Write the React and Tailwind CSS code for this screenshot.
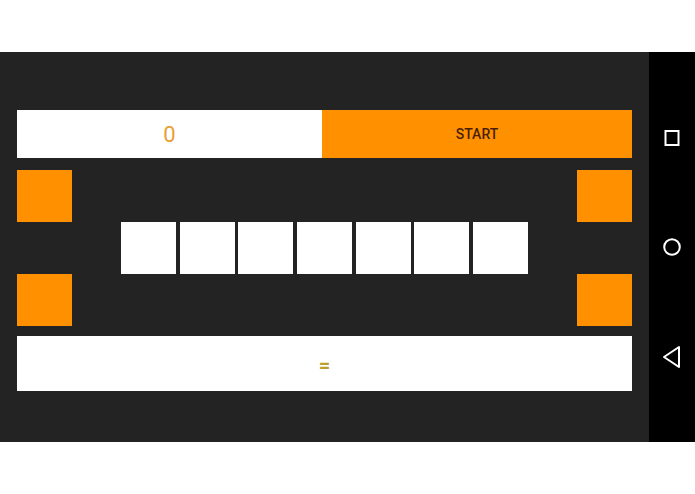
const Orange = () => <div className="h-[52px] w-[55px] bg-[#ff9100]" />;

export default function App() {
  return (
    <div className="w-[695px] h-[494px] bg-white flex flex-col font-['Roboto',sans-serif]">
      <div className="h-[52px]" />
      <div className="h-[390px] flex">
        <div className="w-[649px] bg-[#232323] px-[17px] pt-[58px] flex flex-col">
          <div className="h-[48px] flex">
            <div className="w-[305px] bg-white flex items-center justify-center text-[22px] text-[#e8a035]">0</div>
            <div className="flex-1 bg-[#ff9100] flex items-center justify-center text-[14px] font-medium text-[#4a1e08]">START</div>
          </div>
          <div className="mt-[12px] h-[156px] flex justify-between">
            <div className="flex flex-col justify-between">
              <Orange />
              <Orange />
            </div>
            <div className="flex items-center gap-[3.7px]">
              {[0, 1, 2, 3, 4, 5, 6].map((i) => (
                <div key={i} className="w-[55px] h-[52px] bg-white" />
              ))}
            </div>
            <div className="flex flex-col justify-between">
              <Orange />
              <Orange />
            </div>
          </div>
          <div className="mt-[10px] h-[55px] bg-white flex items-center justify-center text-[20px] font-bold text-[#b8a030] pt-[2px]">=</div>
        </div>
        <div className="flex-1 bg-black flex flex-col items-center">
          <svg width="18" height="18" viewBox="0 0 18 18" className="mt-[77px] -ml-[1px]">
            <rect x="2.5" y="2" width="13" height="14" fill="none" stroke="white" strokeWidth="2" />
          </svg>
          <svg width="20" height="20" viewBox="0 0 20 20" className="mt-[90px]">
            <circle cx="10" cy="10" r="7.8" fill="none" stroke="white" strokeWidth="2" />
          </svg>
          <svg width="20" height="24" viewBox="0 0 20 24" className="mt-[88px]">
            <path d="M17 2 L17 22 L2 12 Z" fill="none" stroke="white" strokeWidth="2" strokeLinejoin="round" />
          </svg>
        </div>
      </div>
      <div className="flex-1" />
    </div>
  );
}
